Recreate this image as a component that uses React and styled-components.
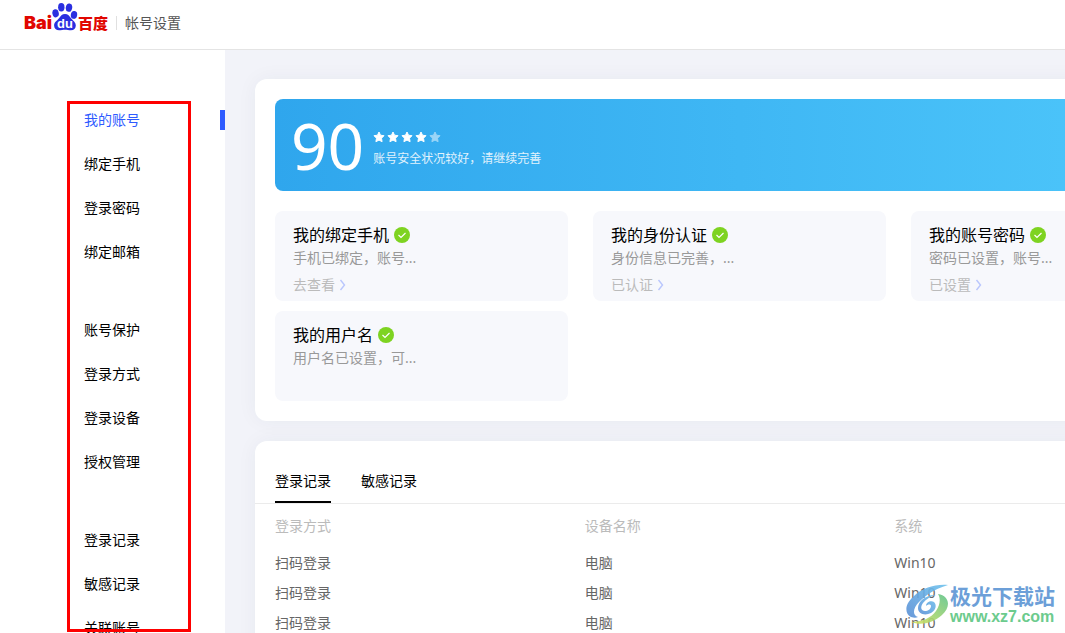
import styled, { createGlobalStyle } from "styled-components";

const GlobalStyle = createGlobalStyle`
  * {
    box-sizing: border-box;
  }
  body {
    margin: 0;
    font-family: "Noto Sans", "Noto Sans CJK SC", sans-serif;
    font-size: 14px;
    line-height: 20px;
    color: #000;
    background: #f2f3f9;
  }
  a {
    color: inherit;
    text-decoration: none;
  }
  button {
    padding: 0;
    border: 0;
    background: none;
    font: inherit;
    color: inherit;
    cursor: pointer;
  }
`;

const Page = styled.div`
  position: relative;
  display: flex;
  flex-direction: column;
  height: 100vh;
  overflow: hidden;
`;

const Header = styled.header`
  display: flex;
  flex: none;
  align-items: center;
  height: 50px;
  padding: 0 24px 4px;
  background: #fff;
  border-bottom: 1px solid #e4e4e4;
`;

const Logo = styled.a`
  display: flex;
  align-items: center;
  height: 45px;
`;

const LogoLatin = styled.span`
  font: 900 18px "Inter", "Liberation Sans", sans-serif;
  color: #e10601;
`;

const LogoHan = styled.span`
  font: 900 15px "Noto Sans CJK SC", sans-serif;
  color: #e10601;
`;

const PawSvg = styled.svg`
  align-self: flex-start;
  width: 26px;
  height: 28px;
  margin-top: 3px;
`;

const HeaderTitle = styled.span`
  margin-left: 8px;
  padding-left: 8px;
  border-left: 1px solid #e0e0e0;
  line-height: 14px;
  color: #555;
`;

const Body = styled.div`
  display: flex;
  flex: 1;
  min-height: 0;
`;

const Sidebar = styled.nav`
  display: flex;
  flex: none;
  flex-direction: column;
  gap: 58px;
  width: 225px;
  padding-top: 60px;
  background: #fff;
`;

const MenuGroup = styled.ul`
  display: flex;
  flex-direction: column;
  gap: 24px;
  margin: 0;
  padding: 0;
  list-style: none;
`;

const MenuLink = styled.a`
  display: block;
  padding-left: 84px;
  border-right: 5px solid ${({ $active }) => ($active ? "#2e5bff" : "transparent")};
  color: ${({ $active }) => ($active ? "#2e5bff" : "#000")};
`;

const Marker = styled.div`
  position: absolute;
  top: 101px;
  bottom: 1px;
  left: 67px;
  width: 124px;
  border: 3px solid #fe0000;
  pointer-events: none;
`;

const Main = styled.main`
  display: flex;
  flex: 1;
  flex-direction: column;
  gap: 20px;
  min-width: 0;
  padding: 29px 30px 0;
`;

const Panel = styled.section`
  flex: none;
  min-width: 969px;
  padding: ${({ $flush }) => ($flush ? "20px 0" : "20px")};
  background: #fff;
  border-radius: 12px;
  box-shadow: 0 0 20px rgba(40, 50, 80, 0.05);
`;

const Banner = styled.div`
  display: flex;
  align-items: center;
  gap: 9px;
  height: 92px;
  padding: 2px 16px 0;
  margin-bottom: 20px;
  color: #fff;
  background: linear-gradient(90deg, #2fa6ed, #4fc8fb);
  border-radius: 8px;
`;

const Score = styled.strong`
  font-size: 64px;
  font-weight: 400;
  line-height: 90px;
`;

const BannerInfo = styled.div`
  padding-top: 8px;
  font-size: 12px;
`;

const Stars = styled.div`
  display: flex;
  gap: 2px;
  height: 12px;
  margin-bottom: 6px;
`;

const BannerText = styled.p`
  margin: 0;
  opacity: 0.85;
`;

const CardGrid = styled.div`
  display: grid;
  grid-template-columns: repeat(3, 1fr);
  gap: 10px 25px;
`;

const Card = styled.article`
  height: 90px;
  padding: 12px 18px 0;
  background: #f7f8fc;
  border-radius: 8px;
`;

const CardTitle = styled.h2`
  display: flex;
  align-items: center;
  gap: 5px;
  margin: 0;
  font-size: 16px;
  font-weight: 400;
  line-height: 24px;
`;

const CardText = styled.p`
  margin: 0 0 6px;
  line-height: 22px;
  color: #999;
`;

const CardLink = styled.a`
  display: inline-flex;
  align-items: center;
  gap: 4px;
  color: #bbb;
`;

const Tabs = styled.div`
  display: flex;
  gap: 30px;
  padding: 0 20px;
  border-bottom: 1px solid #ebebeb;
`;

const Tab = styled.button`
  border-bottom: 2px solid ${({ $active }) => ($active ? "#000" : "transparent")};
  line-height: 40px;
`;

const RecordTable = styled.table`
  width: calc(100% - 40px);
  margin: 0 20px;
  table-layout: fixed;
  border-collapse: collapse;
  text-align: left;

  th {
    height: 44px;
    padding: 0;
    font-weight: 400;
    color: #bbb;
  }
  td {
    height: 30px;
    padding: 0;
    color: #666;
  }
`;

const Watermark = styled.div`
  position: absolute;
  right: 10px;
  bottom: 6px;
  display: flex;
  align-items: center;
  gap: 1px;
  pointer-events: none;
`;

const WatermarkText = styled.div`
  font: bold 21px/24px "Noto Sans CJK SC", sans-serif;
  color: #6c9fd8;
`;

const WatermarkUrl = styled.div`
  font: bold 16px/20px "Liberation Sans", sans-serif;
  color: #6ccb8d;
`;

const menu = [
  ["我的账号", "绑定手机", "登录密码", "绑定邮箱"],
  ["账号保护", "登录方式", "登录设备", "授权管理"],
  ["登录记录", "敏感记录", "关联账号"],
];

const cards = [
  { title: "我的绑定手机", text: "手机已绑定，账号...", link: "去查看" },
  { title: "我的身份认证", text: "身份信息已完善，...", link: "已认证" },
  { title: "我的账号密码", text: "密码已设置，账号...", link: "已设置" },
  { title: "我的用户名", text: "用户名已设置，可..." },
];

const records = [1, 2, 3].map((id) => ({
  id,
  method: "扫码登录",
  device: "电脑",
  system: "Win10",
}));

function Paw() {
  return (
    <PawSvg viewBox="0 0 26 28" aria-hidden="true">
      <g fill="#2a2fe0">
        <ellipse cx="9.3" cy="4.3" rx="3.2" ry="4.2" />
        <ellipse cx="17" cy="4.6" rx="3.2" ry="4.2" transform="rotate(10 17 4.6)" />
        <ellipse cx="3.6" cy="10.3" rx="3.2" ry="4.1" transform="rotate(-12 3.6 10.3)" />
        <ellipse cx="22" cy="11.9" rx="3.2" ry="4" transform="rotate(8 22 11.9)" />
        <path d="M13 11c3 0 4.500 2.200 6 4.200 2 2.400 4.800 4 4.800 7.300 0 3.200-2 4.800-4.800 4.800-2.200 0-4-.5-6-.5s-3.700.5-5.900.5c-2.900 0-5-1.700-5-4.800 0-3.500 3-4.900 4.900-7.300C8.600 13.200 10 11 13 11z" />
      </g>
      <text x="13" y="24.500" textAnchor="middle" fill="#fff" fontSize="13" fontWeight="bold" fontFamily="Liberation Sans">
        du
      </text>
    </PawSvg>
  );
}

function Star({ dim }) {
  return (
    <svg width="12" height="12" viewBox="0 0 12 12" fill="#fff" opacity={dim ? 0.5 : 1}>
      <path
        d="M6 1l1.500 3.200 3.500.5-2.500 2.500.6 3.500L6 9.100l-3.100 1.600.6-3.500L1 4.700l3.500-.5z"
        stroke="#fff"
        strokeWidth="1"
        strokeLinejoin="round"
      />
    </svg>
  );
}

function CheckIcon() {
  return (
    <svg width="16" height="16" viewBox="0 0 16 16" fill="none">
      <circle cx="8" cy="8" r="8" fill="#7ed321" />
      <path d="M4.500 8l2.500 2.500 4.500-4.500" stroke="#fff" strokeWidth="1.200" />
    </svg>
  );
}

function Chevron() {
  return (
    <svg width="7" height="12" viewBox="0 0 7 12" fill="none">
      <path d="M1.500 1l4 5-4 5" stroke="#b9c6fd" strokeWidth="1.400" />
    </svg>
  );
}

function Swirl() {
  return (
    <svg width="44" height="42" viewBox="0 0 44 42" aria-hidden="true">
      <defs>
        <linearGradient id="blue" x1="0" y1="1" x2="1" y2="0">
          <stop offset="0" stopColor="#5b8fd6" />
          <stop offset="1" stopColor="#6fc3ee" />
        </linearGradient>
        <linearGradient id="green" x1="0" y1="1" x2="1" y2="0">
          <stop offset="0" stopColor="#d8e25c" />
          <stop offset="1" stopColor="#5fc48c" />
        </linearGradient>
      </defs>
      <g opacity=".9">
        <path d="M43 1C30 0 17 4 8 13-1 21 0 30 6 33c3 1 5 1 7 0-6-2-5-9 1-15C20 12 29 5 43 1z" fill="url(#blue)" />
        <path d="M31 11c-9-1-18 6-18 13 0 6 7 8 13 5 5-3 6-8 3-11-3-2-8 0-8 4 2-2 5-2 5 0 0 3-3 5-6 5-4 0-5-4-2-8 3-4 8-7 13-8z" fill="url(#blue)" />
        <path d="M33 10c12 2 13 13 4 21-9 8-21 11-31 7 11 0 20-4 25-11 4-6 5-12 2-17z" fill="url(#green)" />
      </g>
    </svg>
  );
}

export default function App() {
  return (
    <Page>
      <GlobalStyle />
      <Header>
        <Logo href="#">
          <LogoLatin>Bai</LogoLatin>
          <Paw />
          <LogoHan>百度</LogoHan>
        </Logo>
        <HeaderTitle>帐号设置</HeaderTitle>
      </Header>
      <Body>
        <Sidebar>
          {menu.map((group) => (
            <MenuGroup key={group[0]}>
              {group.map((item) => (
                <li key={item}>
                  <MenuLink href="#" $active={item === "我的账号"}>
                    {item}
                  </MenuLink>
                </li>
              ))}
            </MenuGroup>
          ))}
        </Sidebar>
        <Main>
          <Panel>
            <Banner>
              <Score>90</Score>
              <BannerInfo>
                <Stars>
                  {[1, 2, 3, 4, 5].map((n) => (
                    <Star key={n} dim={n > 4} />
                  ))}
                </Stars>
                <BannerText>账号安全状况较好，请继续完善</BannerText>
              </BannerInfo>
            </Banner>
            <CardGrid>
              {cards.map(({ title, text, link }) => (
                <Card key={title}>
                  <CardTitle>
                    {title}
                    <CheckIcon />
                  </CardTitle>
                  <CardText>{text}</CardText>
                  {link && (
                    <CardLink href="#">
                      {link}
                      <Chevron />
                    </CardLink>
                  )}
                </Card>
              ))}
            </CardGrid>
          </Panel>
          <Panel $flush>
            <Tabs>
              <Tab $active>登录记录</Tab>
              <Tab>敏感记录</Tab>
            </Tabs>
            <RecordTable>
              <thead>
                <tr>
                  <th>登录方式</th>
                  <th>设备名称</th>
                  <th>系统</th>
                </tr>
              </thead>
              <tbody>
                {records.map(({ id, method, device, system }) => (
                  <tr key={id}>
                    <td>{method}</td>
                    <td>{device}</td>
                    <td>{system}</td>
                  </tr>
                ))}
              </tbody>
            </RecordTable>
          </Panel>
        </Main>
      </Body>
      <Marker />
      <Watermark>
        <Swirl />
        <div>
          <WatermarkText>极光下载站</WatermarkText>
          <WatermarkUrl>www.xz7.com</WatermarkUrl>
        </div>
      </Watermark>
    </Page>
  );
}
